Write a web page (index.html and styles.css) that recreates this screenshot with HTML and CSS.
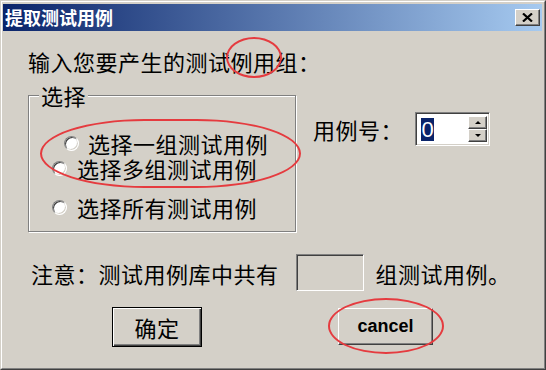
FILE: index.html
```html
<!DOCTYPE html>
<html lang="zh-CN">
<head>
<meta charset="utf-8">
<title>提取测试用例</title>
<link rel="stylesheet" href="styles.css">
</head>
<body>
<div class="window">
  <div class="frame">
    <div class="titlebar">
      <span class="title">提取测试用例</span>
      <button class="close" type="button" aria-label="关闭">
        <svg width="11" height="9" viewBox="0 0 11 9"><path d="M1 0.5 L10 8.5 M10 0.5 L1 8.5" stroke="#000" stroke-width="2.2" fill="none"/></svg>
      </button>
    </div>
    <div class="content">
      <p class="prompt">输入您要产生的测试例用组：</p>
      <div class="main-row">
        <fieldset class="group">
          <legend>选择</legend>
          <label class="opt opt-one"><span class="radio"></span><span>选择一组测试用例</span></label>
          <label class="opt opt-multi"><span class="radio"></span><span>选择多组测试用例</span></label>
          <label class="opt opt-all"><span class="radio"></span><span>选择所有测试用例</span></label>
        </fieldset>
        <div class="case-no">
          <span class="case-label">用例号：</span>
          <div class="spin">
            <span class="spin-value"><span class="sel">0</span></span>
            <span class="spin-btns"><span class="spin-btn up"></span><span class="spin-btn down"></span></span>
          </div>
        </div>
      </div>
      <div class="note-row">
        <span>注意：测试用例库中共有</span>
        <span class="count-box"></span>
        <span>组测试用例。</span>
      </div>
      <div class="btn-row">
        <button class="btn btn-ok" type="button">确定</button>
        <button class="btn btn-cancel" type="button">cancel</button>
      </div>
    </div>
  </div>
  <div class="mark mark-word"></div>
  <div class="mark mark-opts"></div>
  <div class="mark mark-cancel"></div>
</div>
</body>
</html>
```
FILE: styles.css
```css
* { box-sizing: border-box; }
html, body { margin: 0; padding: 0; }
body {
  background: #d4d0c8;
  font-family: "Noto Sans CJK SC", "Noto Sans", sans-serif;
  color: #000;
}
.window {
  position: relative;
  width: 546px;
  height: 370px;
  border: 1px solid;
  border-color: #d4d0c8 #404040 #404040 #d4d0c8;
  background: #d4d0c8;
  overflow: hidden;
}
.frame {
  height: 100%;
  border: 1px solid;
  border-color: #fff #808080 #808080 #fff;
  padding: 2px 2px 2px 1px;
  display: flex;
  flex-direction: column;
}
.titlebar {
  flex: none;
  height: 27px;
  display: flex;
  align-items: center;
  justify-content: space-between;
  background: linear-gradient(to right, #0a246a, #a6caf0);
  padding: 0 2px 0 2px;
}
.title {
  color: #fff;
  font-weight: bold;
  font-size: 18px;
  line-height: 27px;
}
.close {
  width: 25px;
  height: 17px;
  margin: 0;
  padding: 0;
  background: #d4d0c8;
  border: 1px solid;
  border-color: #fff #404040 #404040 #fff;
  box-shadow: inset -1px -1px 0 #808080;
  display: flex;
  align-items: center;
  justify-content: center;
}
.content {
  flex: 1;
  padding: 17px 0 0 25px;
  font-size: 22px;
  letter-spacing: 0.5px;
}
.prompt {
  margin: 0;
  line-height: 26px;
}
.main-row {
  margin-top: 10px;
  display: flex;
  align-items: flex-start;
}
.group {
  margin: 0;
  padding: 0 0 12px 0;
  width: 268px;
  min-width: 0;
  border: 1px solid #808080;
  box-shadow: inset 1px 1px 0 #fff, 1px 1px 0 #fff;
}
.group legend {
  margin-left: 10px;
  padding: 0 2px;
  line-height: 22px;
  background: #d4d0c8;
}
.opt {
  display: flex;
  align-items: center;
  height: 24px;
  line-height: 24px;
  white-space: nowrap;
}
.opt-one { margin-top: 25px; padding-left: 35px; gap: 9px; }
.opt-multi { margin-top: 1px; padding-left: 23px; gap: 10px; }
.opt-all { margin-top: 15px; padding-left: 23px; gap: 10px; }
.radio {
  flex: none;
  width: 15px;
  height: 15px;
  border-radius: 50%;
  background: #fff;
  border: 1px solid;
  border-color: #808080 #fff #fff #808080;
  box-shadow: inset 1px 1px 0 #404040, inset -1px -1px 0 #d4d0c8;
}
.case-no {
  margin: 28px 0 0 17px;
  display: flex;
  align-items: center;
}
.case-label { line-height: 34px; }
.spin {
  margin-left: 12px;
  width: 75px;
  height: 34px;
  display: flex;
  align-items: center;
  background: #fff;
  border: 1px solid;
  border-color: #808080 #fff #fff #808080;
  box-shadow: inset 1px 1px 0 #404040, inset -1px -1px 0 #d4d0c8;
  padding: 0 2px 0 5px;
}
.spin-value { flex: 1; display: flex; }
.sel {
  display: inline-block;
  background: #0a246a;
  color: #fff;
  font-family: "Liberation Sans", sans-serif;
  font-size: 22px;
  line-height: 23px;
  letter-spacing: 0;
  padding: 0 0.5px;
}
.spin-btns {
  display: flex;
  flex-direction: column;
  width: 19px;
  height: 26px;
}
.spin-btn {
  flex: 1;
  background: #d4d0c8;
  border: 1px solid;
  border-color: #fff #404040 #404040 #fff;
  box-shadow: inset -1px -1px 0 #808080;
  display: flex;
  align-items: center;
  justify-content: center;
}
.spin-btn::after {
  content: "";
  border-left: 3px solid transparent;
  border-right: 3px solid transparent;
}
.up::after { border-bottom: 3px solid #000; }
.down::after { border-top: 3px solid #000; }
.note-row {
  margin-top: 22px;
  padding-left: 3px;
  height: 37px;
  display: flex;
  align-items: center;
  white-space: nowrap;
}
.count-box {
  width: 68px;
  height: 37px;
  margin: 0 12px 0 17px;
  border: 1px solid;
  border-color: #808080 #fff #fff #808080;
  box-shadow: inset 1px 1px 0 #404040, inset -1px -1px 0 #d4d0c8;
}
.btn-row {
  margin-top: 16px;
  display: flex;
  align-items: flex-start;
  padding-left: 84px;
  gap: 136px;
}
.btn {
  margin: 0;
  padding: 0;
  background: #d4d0c8;
  color: #000;
  display: flex;
  align-items: center;
  justify-content: center;
}
.btn-ok {
  width: 90px;
  height: 40px;
  border: 1px solid #000;
  box-shadow: inset 1px 1px 0 #fff, inset -1px -1px 0 #404040, inset -2px -2px 0 #808080;
  font-family: "Noto Sans CJK SC", sans-serif;
  font-size: 22px;
  letter-spacing: 0.5px;
}
.btn-cancel {
  margin-top: 1px;
  width: 95px;
  height: 37px;
  border: 1px solid;
  border-color: #fff #404040 #404040 #fff;
  box-shadow: inset -1px -1px 0 #808080;
  font-family: "Liberation Sans", Arial, sans-serif;
  font-weight: bold;
  font-size: 18px;
}
.mark {
  position: absolute;
  border: 2px solid #e53b3f;
  border-radius: 50%;
  pointer-events: none;
}
.mark-word { left: 225px; top: 36px; width: 56px; height: 41px; }
.mark-opts { left: 39px; top: 118px; width: 261px; height: 69px; border-radius: 40% / 50%; }
.mark-cancel { left: 327px; top: 297px; width: 116px; height: 56px; }
```
